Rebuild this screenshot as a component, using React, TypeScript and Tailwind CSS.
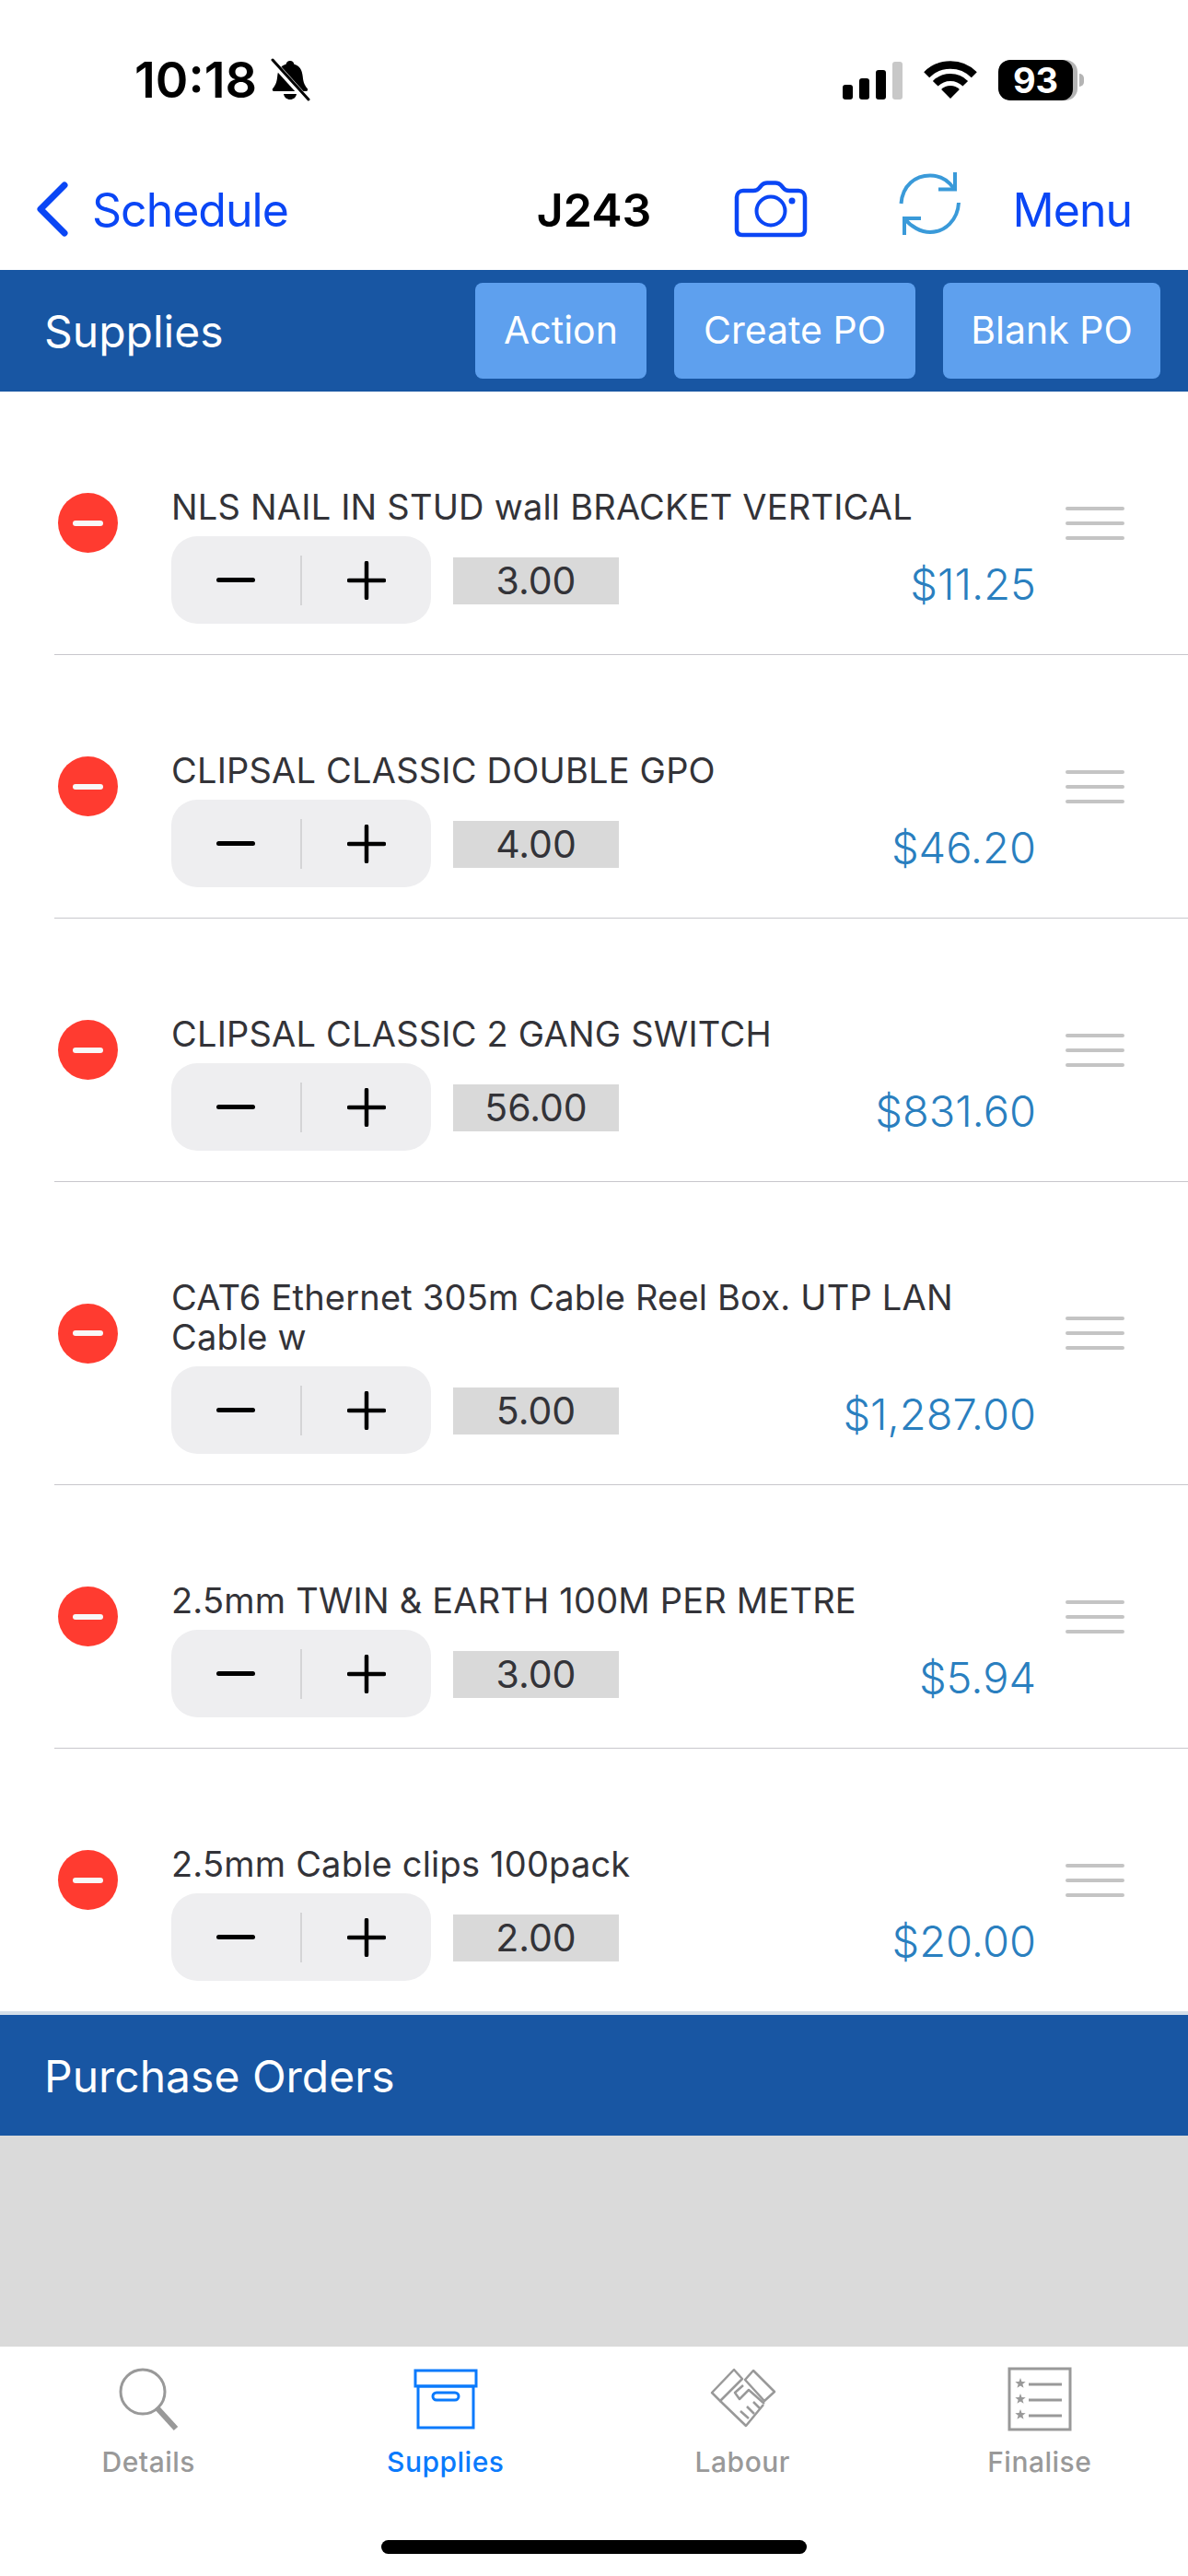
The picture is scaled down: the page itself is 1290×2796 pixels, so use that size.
import type { ReactNode } from "react";

const rows = [
  { name: "NLS NAIL IN STUD wall BRACKET VERTICAL", qty: "3.00", price: "$11.25" },
  { name: "CLIPSAL CLASSIC DOUBLE GPO", qty: "4.00", price: "$46.20" },
  { name: "CLIPSAL CLASSIC 2 GANG SWITCH", qty: "56.00", price: "$831.60" },
  { name: "CAT6 Ethernet 305m Cable Reel Box. UTP LAN Cable w", qty: "5.00", price: "$1,287.00" },
  { name: "2.5mm TWIN & EARTH 100M PER METRE", qty: "3.00", price: "$5.94" },
  { name: "2.5mm Cable clips 100pack", qty: "2.00", price: "$20.00" },
];

function Star({ cx, cy }: { cx: number; cy: number }) {
  const pts = [];
  for (let i = 0; i < 10; i++) {
    const r = i % 2 === 0 ? 6 : 2.5;
    const a = (Math.PI / 5) * i - Math.PI / 2;
    pts.push(`${cx + r * Math.cos(a)},${cy + r * Math.sin(a)}`);
  }
  return <polygon points={pts.join(" ")} fill="#999" stroke="none" />;
}

function StatusBar() {
  return (
    <div className="h-[186px] pt-[57px] flex items-start shrink-0">
      <div className="ml-[146px] flex items-center h-[60px] gap-[14px]">
        <span className="text-[54px] leading-[60px] font-semibold text-black">10:18</span>
        <svg width="44" height="48" viewBox="0 0 44 48">
          <path d="M22 3c2.500 0 4 1.700 4.400 3.800 6 1.600 8.600 6.300 9.300 13 .5 5 1.300 9 5 13.200 1 1.200.3 3-1.300 3H4.500c-1.600 0-2.300-1.800-1.300-3 3.700-4.200 4.500-8.200 5-13.200.7-6.700 3.300-11.400 9.300-13C18 4.700 19.500 3 22 3z" fill="#000" />
          <path d="M15 39h14c-.6 3.800-3.400 6-7 6s-6.400-2.200-7-6z" fill="#000" />
          <path d="M2 3l38 42" stroke="#fff" strokeWidth="7" />
          <path d="M3 2l39 43" stroke="#000" strokeWidth="3" strokeLinecap="round" />
        </svg>
      </div>
      <div className="ml-auto mr-[113px] flex items-center h-[60px] gap-[23px]">
        <div className="flex items-end gap-[7px] h-[41px]">
          <div className="w-[11px] h-[16px] rounded-[3px] bg-black" />
          <div className="w-[11px] h-[23px] rounded-[3px] bg-black" />
          <div className="w-[11px] h-[32px] rounded-[3px] bg-black" />
          <div className="w-[11px] h-[41px] rounded-[3px] bg-[#c8c8c8]" />
        </div>
        <svg width="58" height="42" viewBox="0 0 58 42">
          <path d="M29 41L19.100 31.100A14 14 0 0 1 38.900 31.100z" fill="#000" />
          <path d="M12.740 24.740A23 23 0 0 1 45.260 24.740" fill="none" stroke="#000" strokeWidth="8" />
          <path d="M3.200 15.200A36.500 36.500 0 0 1 54.800 15.200" fill="none" stroke="#000" strokeWidth="8.500" />
        </svg>
        <div className="flex items-center">
          <div className="w-[86px] h-[44px] rounded-[13px] bg-[#b4b4b4] overflow-hidden">
            <div className="w-[81px] h-[44px] rounded-[12px] bg-black flex items-center justify-center">
              <span className="text-[38px] leading-[44px] font-bold text-white">93</span>
            </div>
          </div>
          <div className="w-[5px] h-[14px] ml-[2px] rounded-r-full bg-[#b4b4b4]" />
        </div>
      </div>
    </div>
  );
}

function NavBar() {
  return (
    <div className="h-[107px] flex items-start shrink-0">
      <svg width="40" height="62" viewBox="0 0 40 62" className="ml-[37px] mt-[10px] shrink-0">
        <path d="M33 5L7 31l26 26" fill="none" stroke="#0a46f5" strokeWidth="7" strokeLinecap="round" strokeLinejoin="round" />
      </svg>
      <span className="ml-[23px] mt-[14px] text-[50px] leading-[56px] tracking-[-1px] text-[#0a46f5]">Schedule</span>
      <span className="ml-[270px] mt-[14px] text-[50px] leading-[56px] font-semibold text-black">J243</span>
      <svg width="80" height="62" viewBox="0 0 80 62" className="ml-[90px] mt-[10px] shrink-0">
        <path d="M10 11H21C24 11 26 10 27.500 8L30 5C31.500 3.500 33 2.500 36 2.500H45C48 2.500 49.500 3.500 51 5L53.500 8C55 10 57 11 60 11H70C74 11 77 14 77 18V53C77 57 75 59 71 59H9C5 59 3 57 3 53V18C3 14 6 11 10 11Z" fill="none" stroke="#0a46f5" strokeWidth="4.500" />
        <circle cx="40" cy="33" r="15.500" fill="none" stroke="#0a46f5" strokeWidth="4" />
        <circle cx="63" cy="22" r="3.500" fill="#0a46f5" />
      </svg>
      <svg width="68" height="70" viewBox="0 0 68 70" className="ml-[99px] shrink-0" fill="none" stroke="#3a9ad9" strokeWidth="4">
        <path d="M2.500 35C4 15 18 4.500 34 4.500C45 4.500 54 10 60 19" />
        <path d="M61 1V19.500H43" />
        <path d="M65 34C64 53 50 66 34 66C24 66 13 60 6 51" />
        <path d="M6 69V51H24" />
      </svg>
      <span className="ml-auto mr-[61px] mt-[14px] text-[50px] leading-[56px] tracking-[-1px] text-[#0a46f5]">Menu</span>
    </div>
  );
}

function Row({ name, qty, price }: { name: string; qty: string; price: string }) {
  return (
    <div className="ml-[59px] flex items-center border-b border-[#c8c7cc] last:border-b-0">
      <div className="ml-[4px] w-[65px] h-[65px] rounded-full bg-[#ff3b30] flex items-center justify-center shrink-0">
        <div className="w-[33px] h-[6px] rounded-full bg-[#f8f8f8]" />
      </div>
      <div className="ml-[58px] w-[939px] shrink-0 pt-[104px] pb-[33px]">
        <div className="text-[38px] leading-[43px] tracking-[0.2px] text-[#333338] pr-[40px]">{name}</div>
        <div className="mt-[10px] flex items-start">
          <div className="w-[282px] h-[95px] rounded-[28px] bg-[#eeeef0] flex items-center">
            <div className="flex-1 flex items-center justify-center">
              <div className="w-[42px] h-[5px] rounded-full bg-black" />
            </div>
            <div className="w-[2px] h-[54px] bg-[#d4d4d6]" />
            <div className="flex-1 flex items-center justify-center">
              <svg width="42" height="42" viewBox="0 0 42 42">
                <path d="M21 2v38M2 21h38" stroke="#000" strokeWidth="4.500" strokeLinecap="round" />
              </svg>
            </div>
          </div>
          <div className="ml-[24px] mt-[23px] w-[180px] h-[51px] bg-[#d9d9d9] flex items-center justify-center text-[41px] leading-[51px] text-[#333338]">
            {qty}
          </div>
          <div className="ml-auto mt-[22px] text-[47px] leading-[60px] font-light text-[#2a7fbf]">{price}</div>
        </div>
      </div>
      <div className="ml-[32px] flex flex-col gap-[12px]">
        <div className="w-[64px] h-[4px] rounded-full bg-[#c4c4c4]" />
        <div className="w-[64px] h-[4px] rounded-full bg-[#c4c4c4]" />
        <div className="w-[64px] h-[4px] rounded-full bg-[#c4c4c4]" />
      </div>
    </div>
  );
}

function Tab({ label, active, children }: { label: string; active?: boolean; children: ReactNode }) {
  return (
    <div className="flex-1 flex flex-col items-center pt-[22px]">
      <div className="h-[70px] flex items-center justify-center">{children}</div>
      <span className={`mt-[15px] text-[30px] leading-[36px] tracking-[0.5px] font-medium ${active ? "text-[#0a7afc]" : "text-[#999999]"}`}>
        {label}
      </span>
    </div>
  );
}

export default function App() {
  return (
    <div className="w-[1290px] h-[2796px] bg-white overflow-hidden flex flex-col font-['Inter',sans-serif]">
      <StatusBar />
      <NavBar />
      <div className="h-[132px] bg-[#1856a3] flex items-center shrink-0">
        <span className="ml-[48px] pt-[2px] text-[48px] leading-[56px] text-white">Supplies</span>
        <div className="ml-auto mr-[30px] flex gap-[30px]">
          <button className="w-[186px] h-[104px] rounded-[8px] bg-[#5ea0ee] text-[41px] text-white">Action</button>
          <button className="w-[262px] h-[104px] rounded-[8px] bg-[#5ea0ee] text-[41px] text-white">Create PO</button>
          <button className="w-[236px] h-[104px] rounded-[8px] bg-[#5ea0ee] text-[41px] text-white">Blank PO</button>
        </div>
      </div>
      <div className="h-[1762px] overflow-hidden shrink-0 border-b-[4px] border-[#d5dfe9]">
        {rows.map((r) => (
          <Row key={r.name} {...r} />
        ))}
      </div>
      <div className="h-[131px] bg-[#1856a3] flex items-center shrink-0">
        <span className="ml-[48px] pt-[2px] text-[48px] leading-[56px] text-white">Purchase Orders</span>
      </div>
      <div className="h-[229px] bg-[#dadada] shrink-0" />
      <div className="relative flex-1 flex bg-white">
        <Tab label="Details">
          <svg width="66" height="70" viewBox="0 0 66 70">
            <ellipse cx="27" cy="27" rx="24" ry="24" fill="none" stroke="#999" strokeWidth="3" />
            <path d="M42 44l21 23" stroke="#999" strokeWidth="6" />
          </svg>
        </Tab>
        <Tab label="Supplies" active>
          <svg width="70" height="66" viewBox="0 0 70 66" fill="none" stroke="#0a7afc" strokeWidth="3">
            <rect x="2" y="2" width="66" height="17" />
            <rect x="5" y="19" width="60" height="45" />
            <rect x="21" y="26" width="28" height="8" rx="4" />
          </svg>
        </Tab>
        <Tab label="Labour">
          <svg width="90" height="80" viewBox="0 0 90 80" fill="none" stroke="#999" strokeWidth="2.500" strokeLinejoin="round">
            <path d="M12 33L36 8l9 10L21 42z" />
            <path d="M57 9l23 23-11 10-21-23z" />
            <path d="M21 42l28 27 19-23" />
            <path d="M46 25L37 33l5 7 10-10 17 15" />
            <path d="M43 53l9 8M50 48l8 8M57 43l7 7" />
          </svg>
        </Tab>
        <Tab label="Finalise">
          <svg width="70" height="70" viewBox="0 0 70 70" fill="none" stroke="#999" strokeWidth="3">
            <rect x="2" y="2" width="66" height="66" />
            <path d="M23 19h36M23 36h36M23 53h36" />
            <Star cx={14} cy={18} />
            <Star cx={14} cy={35} />
            <Star cx={14} cy={52} />
          </svg>
        </Tab>
        <div className="absolute left-[414px] top-[210px] w-[462px] h-[15px] rounded-full bg-black" />
      </div>
    </div>
  );
}
